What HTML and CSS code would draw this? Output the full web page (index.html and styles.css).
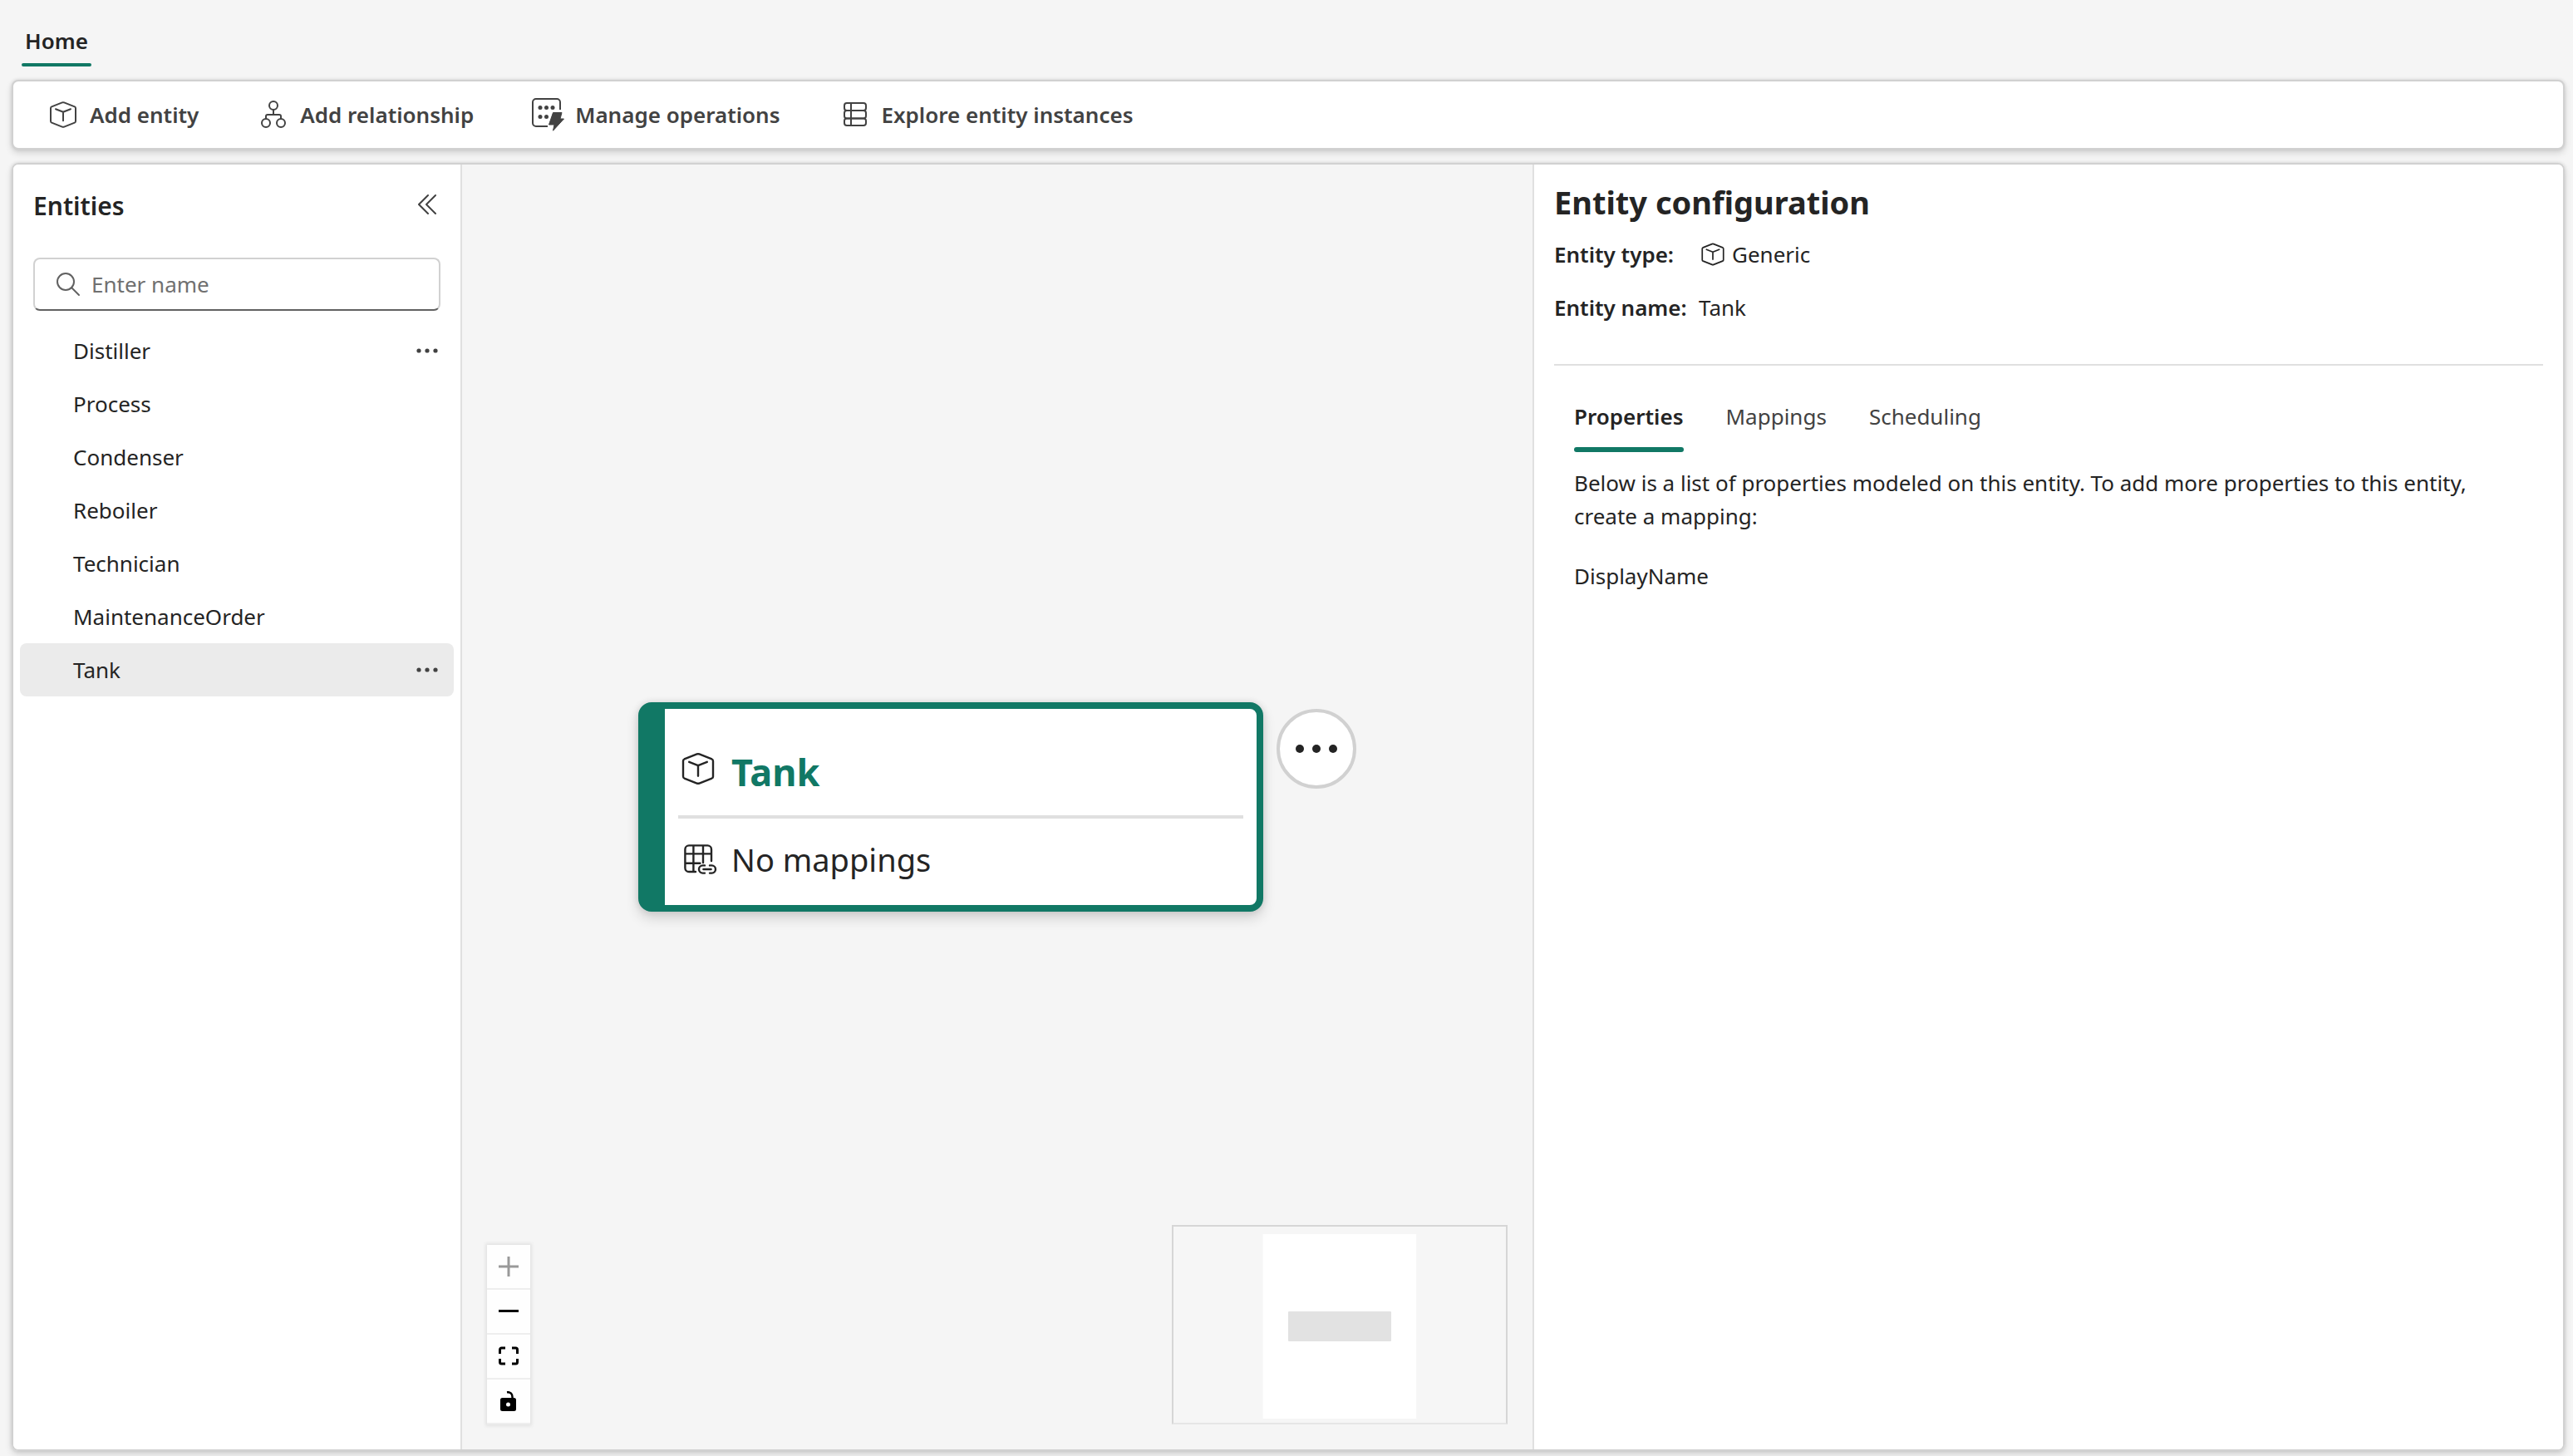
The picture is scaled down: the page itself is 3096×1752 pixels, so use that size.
FILE: index.html
```html
<!DOCTYPE html>
<html lang="en">
<head>
<meta charset="utf-8">
<title>Entities</title>
<link rel="stylesheet" href="styles.css">
</head>
<body>
<svg class="sprite" aria-hidden="true">
  <symbol id="cube" viewBox="0 0 20 20">
    <path fill="none" stroke="currentColor" stroke-linecap="round" stroke-linejoin="round" d="M9.4 2.7 3.1 5.2a1 1 0 0 0-.6.9v7.8a1 1 0 0 0 .6.9l6.3 2.5a1.6 1.6 0 0 0 1.2 0l6.3-2.5a1 1 0 0 0 .6-.9V6.1a1 1 0 0 0-.6-.9l-6.3-2.5a1.6 1.6 0 0 0-1.2 0zM5.500 6.600 10 8.400l4.500-1.800M10 8.400v5.200"/>
  </symbol>
  <symbol id="dots" viewBox="0 0 32 32">
    <g fill="currentColor"><circle cx="6" cy="16" r="2.600"/><circle cx="16" cy="16" r="2.600"/><circle cx="26" cy="16" r="2.600"/></g>
  </symbol>
</svg>

<header class="tabs">
  <button class="tab" type="button">Home</button>
</header>

<div class="toolbar" role="toolbar" aria-label="Home">
  <button class="tool" type="button">
    <svg class="icon"><use href="#cube"/></svg>Add entity
  </button>
  <button class="tool" type="button">
    <svg class="icon" viewBox="0 0 40 40" fill="none" stroke="currentColor" stroke-width="2"><circle cx="20" cy="9" r="5"/><circle cx="11" cy="30" r="5"/><circle cx="29" cy="30" r="5"/><path d="M20 14v6M11 25v-3a2 2 0 0 1 2-2h14a2 2 0 0 1 2 2v3"/></svg>Add relationship
  </button>
  <button class="tool" type="button">
    <svg class="icon" viewBox="0 0 40 40"><path fill="none" stroke="currentColor" stroke-width="2" d="M34 14V5a4 4 0 0 0-4-4H5a4 4 0 0 0-4 4v25a4 4 0 0 0 4 4h14"/><g fill="currentColor"><circle cx="10" cy="11.500" r="2.500"/><circle cx="17.500" cy="11.500" r="2.500"/><circle cx="25" cy="11.500" r="2.500"/><circle cx="10" cy="22.500" r="2.500"/><circle cx="17.500" cy="22.500" r="2.500"/><path stroke="currentColor" stroke-linejoin="round" d="M25.500 17.500h10.500l-2 7.500h4.500L25.500 39.200l1.500-7.200h-6.500z"/></g></svg>Manage operations
  </button>
  <button class="tool" type="button">
    <svg class="icon" viewBox="0 0 40 40" fill="none" stroke="currentColor" stroke-width="2"><rect x="7" y="6" width="26" height="9" rx="3"/><rect x="7" y="15" width="26" height="9.500" rx="3"/><rect x="7" y="24.500" width="26" height="8.500" rx="3"/><path d="M10 15h20M15 6v27"/></svg>Explore entity instances
  </button>
</div>

<div class="workspace">
  <aside class="sidebar">
    <div class="sidebar-head">
      <h2>Entities</h2>
      <button class="icon-button" type="button" aria-label="Collapse">
        <svg class="icon" viewBox="0 0 40 40" fill="none" stroke="currentColor" stroke-width="2" stroke-linecap="round" stroke-linejoin="round"><path d="M21 9 10 20l11 11M30 9 19 20l11 11"/></svg>
      </button>
    </div>
    <label class="search">
      <svg class="icon" viewBox="0 0 40 40" fill="none" stroke="currentColor" stroke-width="2" stroke-linecap="round"><circle cx="17" cy="17" r="10"/><path d="m24 24 9 9"/></svg>
      <input type="text" placeholder="Enter name" aria-label="Enter name">
    </label>
    <ul class="entities">
      <li><button class="entity" type="button">Distiller</button><button class="more" type="button" aria-label="More options"><svg><use href="#dots"/></svg></button></li>
      <li><button class="entity" type="button">Process</button></li>
      <li><button class="entity" type="button">Condenser</button></li>
      <li><button class="entity" type="button">Reboiler</button></li>
      <li><button class="entity" type="button">Technician</button></li>
      <li><button class="entity" type="button">MaintenanceOrder</button></li>
      <li class="selected"><button class="entity" type="button">Tank</button><button class="more" type="button" aria-label="More options"><svg><use href="#dots"/></svg></button></li>
    </ul>
  </aside>

  <main class="canvas">
    <div class="node">
      <div class="card">
        <div class="card-title"><svg><use href="#cube"/></svg><strong>Tank</strong></div>
        <div class="card-row">
          <svg viewBox="0 0 24 24" fill="none" stroke="currentColor" stroke-width="1.200" stroke-linecap="round"><path d="M20 13V6a2.300 2.300 0 0 0-2.300-2.300H6.500A2.300 2.300 0 0 0 4.200 6v11.200a2.300 2.300 0 0 0 2.300 2.300h4M4.200 8.700H20M4.200 14.400h9M9.200 3.700v15.800M15 3.700v10.300"/><path d="M16 15.700h-1.200a2.300 2.300 0 0 0 0 4.600H16M19 15.700h1.200a2.300 2.300 0 0 1 0 4.600H19M15.200 18h4.600"/></svg>
          <span>No mappings</span>
        </div>
      </div>
      <button class="node-more" type="button" aria-label="More options">
        <svg viewBox="0 0 56 56" fill="currentColor"><circle cx="8" cy="28" r="5"/><circle cx="28" cy="28" r="5"/><circle cx="48" cy="28" r="5"/></svg>
      </button>
    </div>

    <div class="controls">
      <button type="button" aria-label="Zoom in" disabled><svg viewBox="0 0 24 24"><path fill="currentColor" d="M10.500 0h3v10.500H24v3H13.500V24h-3V13.500H0v-3h10.500z"/></svg></button>
      <button type="button" aria-label="Zoom out"><svg viewBox="0 0 24 24"><path fill="currentColor" d="M0 10h24v3H0z"/></svg></button>
      <button type="button" aria-label="Fit view"><svg viewBox="0 0 24 24"><path fill="none" stroke="currentColor" stroke-width="3" d="M1.500 9V4a2 2 0 0 1 2-2H8M16 2h4.500a2 2 0 0 1 2 2v5M22.500 15v4a2 2 0 0 1-2 2H16M8 21H3.500a2 2 0 0 1-2-2v-4"/></svg></button>
      <button type="button" aria-label="Lock"><svg viewBox="0 0 24 24"><path fill="currentColor" fill-rule="evenodd" d="M4.500 8h14A2.500 2.500 0 0 1 21 10.500v11a2.500 2.500 0 0 1-2.500 2.500h-14A2.500 2.500 0 0 1 2 21.500v-11A2.500 2.500 0 0 1 4.500 8zM11.500 13.500a2.500 2.500 0 1 0 0 5 2.500 2.500 0 0 0 0-5z"/><path fill="none" stroke="currentColor" stroke-width="2.500" d="M10 1.200c4-.4 7 2 6.500 7.300"/></svg></button>
    </div>

    <svg class="minimap" viewBox="0 0 400 236" role="img" aria-label="Mini map">
      <rect x="107.700" y="9" width="184.500" height="222" fill="#fff"/>
      <rect x="138" y="102" width="124" height="36" rx="1" fill="#e2e2e2"/>
    </svg>
  </main>

  <section class="config">
    <h1>Entity configuration</h1>
    <dl class="facts">
      <dt>Entity type:</dt><dd><svg><use href="#cube"/></svg>Generic</dd>
      <dt>Entity name:</dt><dd>Tank</dd>
    </dl>
    <div class="config-tabs" role="tablist">
      <button class="config-tab active" type="button" role="tab" aria-selected="true">Properties</button>
      <button class="config-tab" type="button" role="tab" aria-selected="false">Mappings</button>
      <button class="config-tab" type="button" role="tab" aria-selected="false">Scheduling</button>
    </div>
    <div class="config-body">
      <p>Below is a list of properties modeled on this entity. To add more properties to this entity, create a mapping:</p>
      <p>DisplayName</p>
    </div>
  </section>
</div>
</body>
</html>
```
FILE: styles.css
```css
* { box-sizing: border-box; }

body {
  margin: 0;
  min-height: 100vh;
  padding: 0 10px 6px 14px;
  display: flex;
  flex-direction: column;
  background: #f5f5f5;
  color: #242424;
  font: 26px/40px "Noto Sans", "Open Sans", sans-serif;
}

button {
  margin: 0;
  padding: 0;
  border: 0;
  background: none;
  color: inherit;
  font: inherit;
  text-align: left;
}

svg { display: block; flex: none; }
h1, h2, p, ul, dl, dd { margin: 0; padding: 0; }
.sprite { position: absolute; width: 0; height: 0; }
.icon { width: 40px; height: 40px; }

/* Top tabs */
.tabs { display: flex; padding: 29px 12px 16px; }
.tab {
  position: relative;
  padding: 0 4px 11px;
  font-weight: 600;
}
.tab::after {
  content: "";
  position: absolute;
  inset: auto 0 0;
  height: 4px;
  border-radius: 4px;
  background: #117865;
}

/* Toolbar */
.toolbar, .workspace {
  border: 2px solid #d1d1d1;
  border-radius: 8px;
  box-shadow: 0 0 4px rgba(0, 0, 0, .12), 0 4px 8px rgba(0, 0, 0, .14);
}
.toolbar {
  display: flex;
  gap: 70px;
  padding: 20px 40px;
  background: #fff;
  color: #424242;
}
.tool {
  display: flex;
  align-items: center;
  gap: 12px;
  font-weight: 600;
  white-space: nowrap;
}

/* Workspace */
.workspace {
  flex: 1;
  display: flex;
  margin-top: 16px;
  overflow: hidden;
}

.sidebar {
  flex: none;
  width: 540px;
  padding: 28px 8px;
  border-right: 2px solid #e0e0e0;
  background: #fff;
}
.sidebar-head {
  display: flex;
  align-items: flex-start;
  justify-content: space-between;
  padding: 0 12px 0 16px;
}
.sidebar-head h2 { font-size: 30px; line-height: 44px; font-weight: 600; }
.icon-button { color: #424242; }
.search {
  display: flex;
  align-items: center;
  gap: 8px;
  height: 64px;
  margin: 40px 16px 16px;
  padding: 0 20px;
  border: 2px solid #d1d1d1;
  border-bottom-color: #616161;
  border-radius: 8px;
  color: #616161;
}
.search input {
  flex: 1;
  min-width: 0;
  padding: 0;
  border: 0;
  outline: 0;
  background: none;
  font: inherit;
  color: #242424;
}
.search input::placeholder { color: #707070; opacity: 1; }

.entities { list-style: none; }
.entities li {
  display: flex;
  align-items: center;
  height: 64px;
  padding: 0 16px 0 64px;
  border-radius: 8px;
}
.entities .selected { background: #ebebeb; }
.entity { flex: 1; }
.more { color: #424242; }
.more svg { width: 32px; height: 32px; }

/* Canvas */
.canvas {
  flex: 1;
  position: relative;
  min-width: 0;
  background: #f5f5f5;
}
.node {
  position: absolute;
  left: 212px;
  top: 647px;
  display: flex;
  align-items: flex-start;
  gap: 16px;
}
.card {
  width: 752px;
  padding: 0 16px;
  border: 8px solid #117865;
  border-left-width: 32px;
  border-radius: 16px;
  background: #fff;
  box-shadow: 0 0 8px rgba(0, 0, 0, .12), 0 8px 16px rgba(0, 0, 0, .14);
}
.card svg { width: 48px; height: 48px; }
.card-title, .card-row { display: flex; align-items: center; gap: 16px; }
.card-title {
  align-items: flex-start;
  padding: 48px 0 24px;
  border-bottom: 4px solid #e0e0e0;
}
.card-title strong { color: #117865; font-size: 45px; line-height: 56px; }
.card-row { padding: 20px 0 26px; font-size: 38px; line-height: 58px; }
.node-more {
  display: grid;
  place-items: center;
  width: 96px;
  height: 96px;
  margin-top: 8px;
  border: 4px solid #d1d1d1;
  border-radius: 50%;
  background: #fff;
}
.node-more svg { width: 56px; height: 56px; }

.controls {
  position: absolute;
  left: 30px;
  bottom: 30px;
  box-shadow: 0 0 4px 2px rgba(0, 0, 0, .08);
}
.controls button {
  display: grid;
  place-items: center;
  width: 52px;
  height: 54px;
  border-bottom: 2px solid #eee;
  background: #fefefe;
  color: #000;
}
.controls button:disabled { color: #999; }
.controls svg { width: 24px; height: 24px; }

.minimap {
  position: absolute;
  right: 30px;
  bottom: 30px;
  width: 404px;
  height: 240px;
  border: 2px solid #d6d6d6;
  border-bottom-color: #e6e6e6;
  background: #f6f6f6;
}

/* Configuration panel */
.config {
  flex: none;
  width: 1240px;
  padding: 20px 24px;
  border-left: 2px solid #e0e0e0;
  background: #fff;
}
.config h1 { font-size: 38px; line-height: 50px; }
.facts {
  display: grid;
  grid-template-columns: 174px 1fr;
  margin: 6px 0 24px;
  padding-bottom: 36px;
  border-bottom: 2px solid #e0e0e0;
  line-height: 64px;
}
.facts dt { font-weight: 600; white-space: nowrap; }
.facts dd { display: flex; align-items: center; gap: 6px; }
.facts svg { width: 34px; height: 34px; }
.config-tabs { display: flex; gap: 51px; padding: 0 24px; }
.config-tab {
  position: relative;
  padding: 17px 0 23px;
  color: #424242;
}
.config-tab.active { color: #242424; font-weight: 600; }
.config-tab.active::after {
  content: "";
  position: absolute;
  inset: auto 0 0;
  height: 6px;
  border-radius: 6px;
  background: #117865;
}
.config-body {
  display: grid;
  gap: 32px;
  padding: 17px 48px 0 24px;
}
```
